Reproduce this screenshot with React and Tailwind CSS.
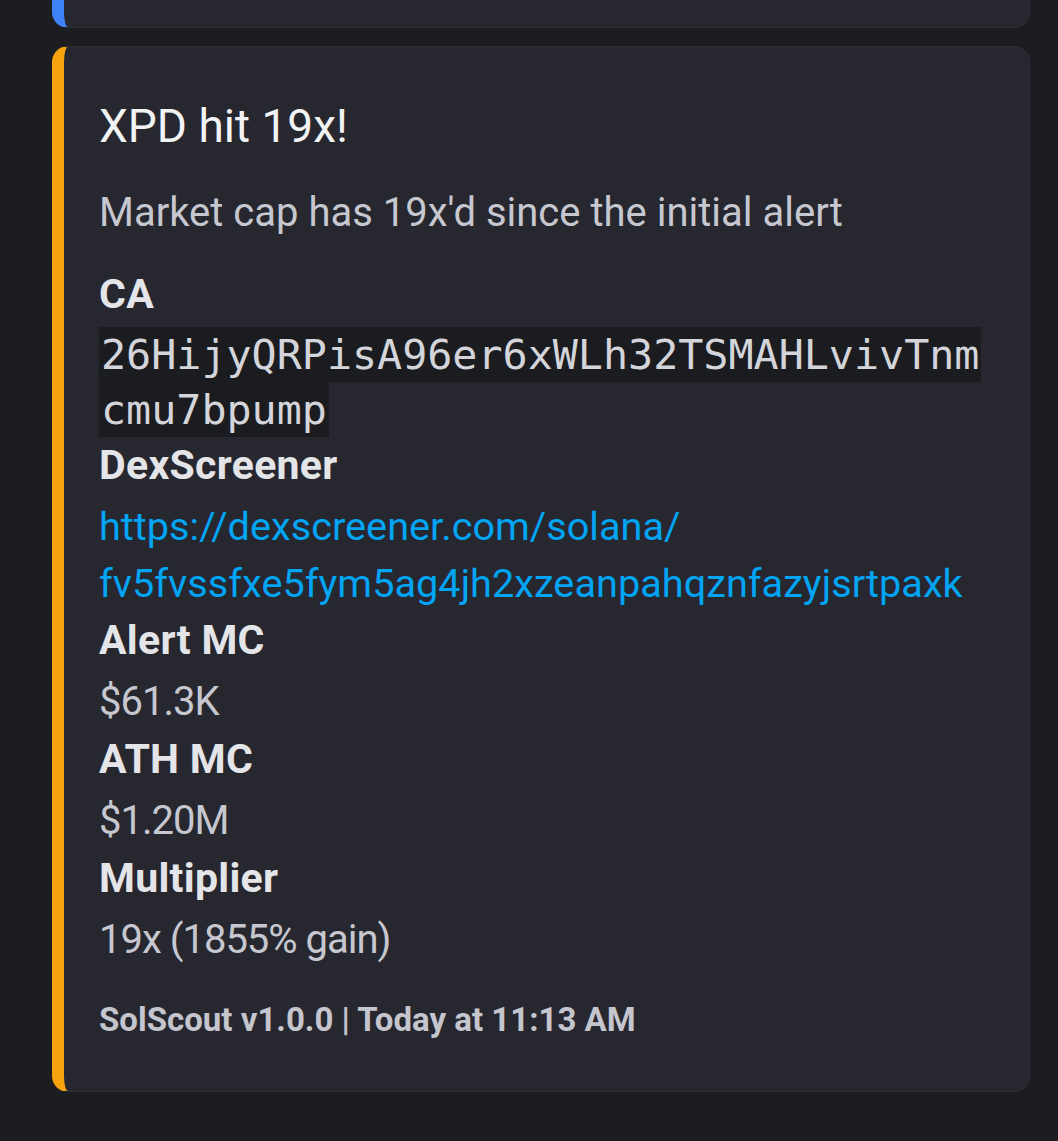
const fields = [
  { name: 'Alert MC', value: '$61.3K' },
  { name: 'ATH MC', value: '$1.20M' },
  { name: 'Multiplier', value: '19x (1855% gain)' },
]

export default function App() {
  return (
    <div className="min-h-screen bg-[#1c1d21] pl-[52px] pr-[28px] font-['Roboto',sans-serif]">
      {/* previous embed, cut off at the top */}
      <div className="h-[28px] rounded-b-[16px] border border-t-0 border-[#2d2e36] border-l-[12px] border-l-[#3d82f6] bg-[#27272f]" />

      <div className="mt-[18px] rounded-[16px] border border-[#2d2e36] border-l-[12px] border-l-[#f6a20e] bg-[#27272f] pl-[35px] pr-[39px] pt-[51px] pb-[51px]">
        <div className="text-[46px] leading-[56px] text-[#f2f3f5]">XPD hit 19x!</div>

        <div className="mt-[30px] text-[40px] leading-[58px] text-[#c6c7cf]">
          Market cap has 19x'd since the initial alert
        </div>

        {/* ── CA ───────────────────────────────────────── */}
        <div className="mt-[24px] text-[41px] leading-[57px] tracking-[0.3px] font-bold text-[#e4e5e9]">CA</div>
        <div className="mt-[4px] text-[41.7px] leading-[55px] break-all font-['DejaVu_Sans_Mono',monospace] text-[#d4d5db]">
          <span className="bg-[#1b1c20] px-[2px] py-[3px] [box-decoration-break:clone]">
            26HijyQRPisA96er6xWLh32TSMAHLvivTnmcmu7bpump
          </span>
        </div>

        {/* ── DexScreener ──────────────────────────────── */}
        <div className="text-[41px] leading-[57px] tracking-[0.3px] font-bold text-[#e4e5e9]">DexScreener</div>
        <div className="mt-[4px] text-[39.7px] leading-[57px] text-[#02a4f4]">
          https://dexscreener.com/solana/<wbr />fv5fvssfxe5fym5ag4jh2xzeanpahqznfazyjsrtpaxk
        </div>

        {fields.map(f => (
          <div key={f.name}>
            <div className="text-[41px] leading-[57px] tracking-[0.3px] font-bold text-[#e4e5e9]">{f.name}</div>
            <div className="mt-[4px] text-[40px] leading-[58px] tracking-[-1px] text-[#c6c7cf]">{f.value}</div>
          </div>
        ))}

        <div className="mt-[31px] text-[33px] leading-[40px] font-bold text-[#c4c5cd]">
          SolScout v1.0.0 | Today at 11:13 AM
        </div>
      </div>
    </div>
  )
}
